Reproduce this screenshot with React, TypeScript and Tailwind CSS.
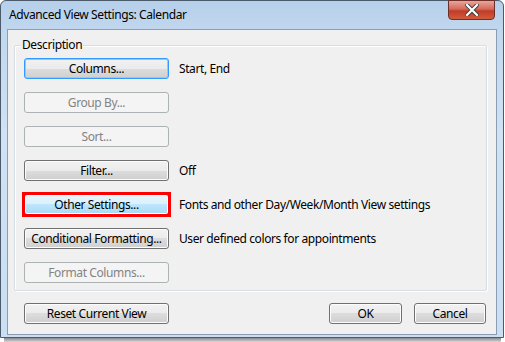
import React from "react";

const font = { fontFamily: '"Segoe UI", "Noto Sans", "Open Sans", sans-serif' };

function Btn({
  label,
  kind = "normal",
  className = "",
}: {
  label: string;
  kind?: "normal" | "default" | "disabled" | "hot";
  className?: string;
}) {
  const base =
    "h-[21px] rounded-[3px] border flex items-center justify-center text-[12px] tracking-[-0.4px] leading-none";
  let cls = "";
  if (kind === "normal")
    cls =
      "border-[#707070] text-black bg-[linear-gradient(to_bottom,#f2f2f2_0%,#ebebeb_50%,#dddddd_50%,#cfcfcf_100%)] shadow-[inset_0_0_0_1px_#fcfcfc]";
  if (kind === "default")
    cls =
      "border-[#3399ff] text-black bg-[linear-gradient(to_bottom,#f2f2f2_0%,#ebebeb_50%,#dddddd_50%,#cfcfcf_100%)] shadow-[inset_0_0_0_1px_#7fd4fc]";
  if (kind === "hot")
    cls =
      "border-[#3c7fb1] text-black bg-[linear-gradient(to_bottom,#eaf6fd_0%,#d9f0fc_50%,#bee6fd_50%,#a7d9f5_100%)] shadow-[inset_0_0_0_1px_#f6fcff]";
  if (kind === "disabled")
    cls = "border-[#adb2b5] text-[#838383] bg-[#f4f4f4]";
  return <div className={`${base} ${cls} ${className}`}>{label}</div>;
}

function Row({
  label,
  kind,
  desc,
  highlight,
}: {
  label: string;
  kind?: "normal" | "default" | "disabled" | "hot";
  desc?: string;
  highlight?: boolean;
}) {
  return (
    <div className="flex items-center h-[21px]">
      <div className="relative">
        <Btn label={label} kind={kind} className="w-[145px]" />
        {highlight && (
          <div className="absolute -left-[2px] -top-[2px] w-[149px] h-[25px] border-[3px] border-[#ff0000]" />
        )}
      </div>
      {desc && (
        <span className="ml-[10px] text-[12px] tracking-[-0.4px] text-black whitespace-nowrap">{desc}</span>
      )}
    </div>
  );
}

export default function App() {
  return (
    <div className="w-[505px] h-[342px] bg-white overflow-hidden" style={font}>
      <div className="relative w-[504px] h-[338px] rounded-t-[6px] border border-[#4c5b6c] bg-[linear-gradient(to_bottom,#b6cfea_0%,#c2d8ef_10%,#d0e2f4_40%,#cadff3_100%)] flex flex-col">
        <div className="h-[28px] flex items-center pl-[8px] shrink-0">
          <span className="text-[12px] tracking-[-0.4px] text-black">Advanced View Settings: Calendar</span>
        </div>
        <div className="absolute top-[-1px] right-[8px] w-[47px] h-[20px] rounded-b-[4px] border border-[#6d2e2a] bg-[linear-gradient(to_bottom,#e8a69b_0%,#d4695a_45%,#c23b25_55%,#d05b3f_100%)] flex items-center justify-center">
          <svg width="14" height="12" viewBox="0 0 14 12">
            <path d="M2 1 L12 11 M12 1 L2 11" stroke="#3a3a3a" strokeWidth="4" strokeLinecap="square" />
            <path d="M2 1 L12 11 M12 1 L2 11" stroke="#ffffff" strokeWidth="2.2" strokeLinecap="square" />
          </svg>
        </div>
        <div className="mx-[6px] h-[306px] border border-[#8a9db2] bg-[#f0f0f0] flex flex-col pl-[6px] pr-[9px]">
          <div className="relative mt-[15px] h-[246px] border border-[#d5dfe5] rounded-[2px] shadow-[inset_1px_1px_0_#ffffff,1px_1px_0_#ffffff]">
            <span className="absolute -top-[10px] left-[6px] px-[1px] bg-[#f0f0f0] text-[12px] tracking-[-0.4px] text-black leading-[18px]">
              Description
            </span>
            <div className="pl-[9px] pt-[12px] flex flex-col gap-[13px]">
              <Row label="Columns..." kind="default" desc="Start, End" />
              <Row label="Group By..." kind="disabled" />
              <Row label="Sort..." kind="disabled" />
              <Row label="Filter..." kind="normal" desc="Off" />
              <Row label="Other Settings..." kind="hot" desc="Fonts and other Day/Week/Month View settings" highlight />
              <Row label="Conditional Formatting..." kind="normal" desc="User defined colors for appointments" />
              <Row label="Format Columns..." kind="disabled" />
            </div>
          </div>
          <div className="mt-[12px] flex items-center">
            <Btn label="Reset Current View" className="w-[145px] ml-[10px]" />
            <div className="flex-1" />
            <Btn label="OK" className="w-[73px]" />
            <Btn label="Cancel" className="w-[72px] ml-[12px] mr-[1px]" />
          </div>
        </div>
      </div>
      <div className="h-[4px] bg-[linear-gradient(to_bottom,#8a8a8a,#d8d8d8)] mx-[4px]" />
    </div>
  );
}
